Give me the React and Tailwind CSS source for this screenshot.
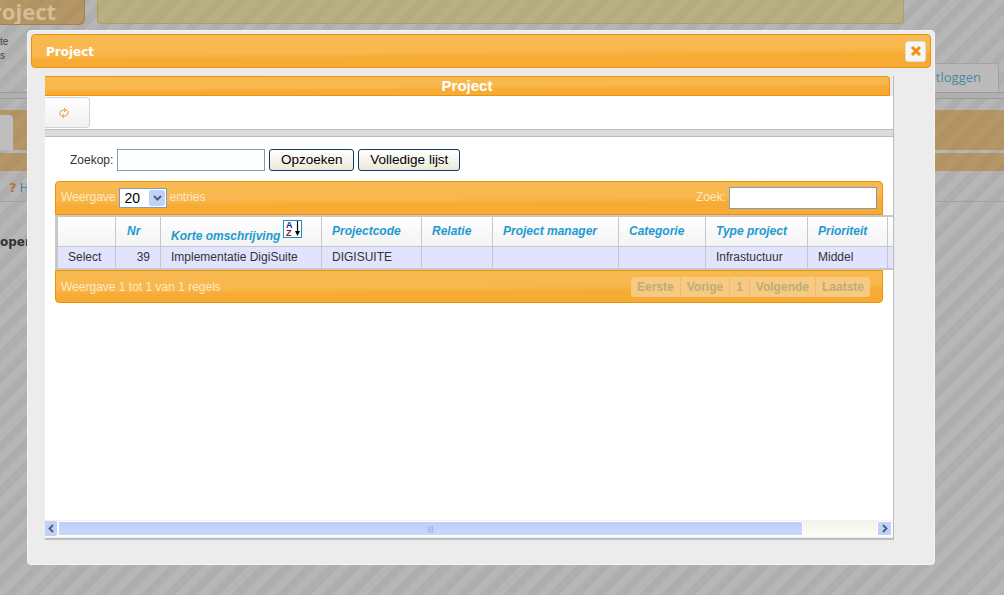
import React from 'react';

const columns = [
  { label: '', width: 'w-[58px]' },
  { label: 'Nr', width: 'w-[45px]', pad: 'pl-[11px] pr-[10px]' },
  { label: 'Korte omschrijving', width: 'w-[161px]', sort: true },
  { label: 'Projectcode', width: 'w-[100px]' },
  { label: 'Relatie', width: 'w-[71px]' },
  { label: 'Project manager', width: 'w-[126px]' },
  { label: 'Categorie', width: 'w-[87px]' },
  { label: 'Type project', width: 'w-[102px]' },
  { label: 'Prioriteit', width: 'w-[80px]' },
  { label: '', width: 'w-[6px]', pad: 'px-0' },
];

const row = ['Select', '39', 'Implementatie DigiSuite', 'DIGISUITE', '', '', '', 'Infrastuctuur', 'Middel', ''];
const pages = ['Eerste', 'Vorige', '1', 'Volgende', 'Laatste'];

const orange = 'bg-[linear-gradient(179.6deg,#f8b950_0%,#f8b84e_50%,#f7ab33_66%,#f7ab33_100%)] border border-[#e8930f]';
const dimmed = 'bg-[rgba(180,120,30,0.52)]';

const SortIcon = () => (
  <svg width="19" height="18" viewBox="0 0 19 18" className="absolute left-[122px] top-[3px]">
    <rect x="0.5" y="0.5" width="18" height="17" fill="#fff" stroke="#1e90c0" />
    <text x="3" y="8" fontSize="9" fontStyle="normal" fontWeight="700" fontFamily="Liberation Sans" fill="#1a1a8c">A</text>
    <text x="3" y="16" fontSize="9" fontStyle="normal" fontWeight="700" fontFamily="Liberation Sans" fill="#8c1a1a">Z</text>
    <path d="M14.5 1v11" stroke="#000" strokeWidth="1.2" />
    <path d="M12 11h5l-2.5 5z" fill="#000" />
  </svg>
);

const ScrollArrow = ({ right }) => (
  <svg width="8" height="9" viewBox="0 0 8 9">
    <path d={right ? 'M2 1l3.5 3.5L2 8' : 'M6 1L2.5 4.5 6 8'} fill="none" stroke="#4d6185" strokeWidth="2" />
  </svg>
);

export default function App() {
  return (
    <div className="relative h-[595px] w-[1004px] overflow-hidden bg-[repeating-linear-gradient(135deg,#b6b6b6_0px,#b6b6b6_8px,#aeaeae_8px,#aeaeae_16px)] font-['Liberation_Sans',sans-serif] text-xs">
      {/* Page behind the overlay */}
      <div className="flex gap-3">
        <div className={`${dimmed} flex h-[25px] w-[85px] items-center justify-end overflow-hidden rounded-br-md border-b border-r border-[#a87f3e] pr-[28px]`}>
          <span className="font-['Open_Sans',sans-serif] text-[22px] font-bold whitespace-nowrap text-[#d6bd93]">Project</span>
        </div>
        <div className="h-[24px] w-[807px] rounded-b-sm border-b border-r border-l border-[#ad9f5c] bg-[rgba(185,170,90,0.55)]" />
      </div>
      <div className="mt-[10px] h-[28px] text-[10px] leading-[14px] text-[#444]">
        <div>te</div>
        <div>s</div>
      </div>
      <div className="flex h-[29px] justify-end pr-[5px]">
        <div className="h-[29px] w-[80px] rounded-t border border-b-0 border-[#a3a3a3] bg-[#bbb] pr-[17px] pt-[5px] text-right font-['Open_Sans',sans-serif] text-[13px] text-[#4d87a0]">Uitloggen</div>
      </div>
      <div className="h-[7px] border-y border-[#999] bg-[#b0b0b0]" />
      <div className={`${dimmed} mt-[11px] flex h-[40px] items-end`}>
        <div className="h-[35px] w-[13px] rounded-tr-sm bg-[#bebebe]" />
      </div>
      <div className={`${dimmed} mt-[3px] h-[18px]`} />
      <div className="mt-[8px] flex h-[23px] items-start border-b border-[#a0a0a0] pl-[9px] font-['DejaVu_Sans',sans-serif] text-[13px] font-bold">
        <span className="text-[#b07a2a]">?</span>
        <span className="ml-[3px] font-normal text-[#4d87a0]">H</span>
      </div>
      <div className="mt-[32px] font-['DejaVu_Sans',sans-serif] text-[12px] font-bold text-[#333]">oper</div>

      {/* Dialog */}
      <div className="absolute left-[27px] top-[30px] h-[535px] w-[908px] rounded border border-[#f4f4f4] bg-[#ececec] p-[3px]">
        <div className={`${orange} flex h-[34px] items-center justify-between rounded pl-[14px] pr-[4px]`}>
          <span className="pt-[1px] font-['DejaVu_Sans',sans-serif] text-[12px] font-bold text-white">Project</span>
          <button className="flex h-[21px] w-[21px] items-center justify-center rounded-[3px] border border-[#ddd] bg-[#f6f6f6]">
            <svg width="12" height="12" viewBox="0 0 12 12">
              <path d="M2 2l8 8M10 2l-8 8" stroke="#f0900c" strokeWidth="3" />
            </svg>
          </button>
        </div>

        <div className="ml-[14px] mt-[8px] h-[464px] w-[849px] border-b-2 border-r border-[#bdbdbd]">
          {/* Inner header */}
          <div className={`${orange} mt-[1px] flex h-[20px] w-[845px] items-center justify-center rounded-tr border-l-0 text-[15px] font-bold text-white`}>Project</div>

          {/* Toolbar */}
          <div className="h-[34px] border-b border-[#bbb] bg-white pt-[1px]">
            <div className="flex h-[31px] w-[45px] items-center rounded-r border border-l-0 border-[#d4d4d4] bg-[linear-gradient(#fff,#f1f1f1)] pl-[14px] pt-[1px]">
              <svg width="10" height="12" viewBox="0 0 10 12" fill="none" stroke="#e8963a" strokeWidth="1">
                <path d="M2 9A3.6 3.6 0 0 1 3.5 3h3M5 1l2 2-2 2" />
                <path d="M8 3A3.6 3.6 0 0 1 6.5 9h-3M5 7L3 9l2 2" />
              </svg>
            </div>
          </div>
          <div className="h-[6px] bg-[#dcdcdc]" />

          <div className="h-[384px] border-t border-[#bbb] bg-white">
            {/* Search form */}
            <div className="ml-[25px] mt-[12px] flex h-[22px] items-center text-[12px] text-[#333]">
              <span>Zoekop:</span>
              <input className="ml-[4px] h-[22px] w-[148px] border border-[#7f9db9] bg-white" />
              <button className="ml-[4px] h-[22px] w-[85px] rounded-[3px] border border-[#0f3a62] bg-[linear-gradient(#fff,#ece9d8)] text-[13.5px] text-black">Opzoeken</button>
              <button className="ml-[4px] h-[22px] w-[102px] rounded-[3px] border border-[#0f3a62] bg-[linear-gradient(#fff,#ece9d8)] text-[13.5px] text-black">Volledige lijst</button>
            </div>

            {/* Table top bar */}
            <div className={`${orange} ml-[10px] mt-[10px] flex h-[34px] w-[828px] items-center justify-between rounded-t pl-[5px] pr-[5px] text-[12px] text-[#fde9c8]`}>
              <div className="flex items-center">
                <span className="pb-[2px]">Weergave</span>
                <div className="ml-[4px] mr-[2px] flex h-[20px] w-[48px] items-center justify-between border border-[#7f9db9] bg-white pl-[4px] pr-[1px] text-[14px] text-black">
                  <span>20</span>
                  <span className="flex h-[16px] w-[16px] items-center justify-center rounded-[2px] bg-[#c1d2f7]">
                    <svg width="9" height="7" viewBox="0 0 9 7">
                      <path d="M1 1l3.5 3.5L8 1" fill="none" stroke="#4d6185" strokeWidth="2" />
                    </svg>
                  </span>
                </div>
                <span className="pb-[2px]">entries</span>
              </div>
              <div className="flex items-center">
                <span className="pb-[2px]">Zoek:</span>
                <input className="ml-[3px] h-[22px] w-[148px] border border-[#7f9db9] bg-white" />
              </div>
            </div>

            {/* Table */}
            <div className="ml-[10px] w-[838px] overflow-hidden border-y-2 border-l-2 border-[#c8c8c8] bg-white">
              <table className="w-[836px] table-fixed border-collapse text-[12px]">
                <thead>
                  <tr className="h-[29px] bg-[linear-gradient(#fff,#f3f3f3)]">
                    {columns.map((col, i) => (
                      <th key={i} className={`${col.width} ${col.pad || 'px-[10px]'} relative border-x border-b border-[#c8c8c8] text-left font-bold italic text-[#1e9ad0]`}>
                        <span className={`block whitespace-nowrap ${col.sort ? 'pt-[9px]' : ''}`}>{col.label}</span>
                        {col.sort && <SortIcon />}
                      </th>
                    ))}
                  </tr>
                </thead>
                <tbody>
                  <tr className="h-[22px] bg-[#e2e4ff]">
                    {row.map((cell, i) => (
                      <td key={i} className={`${i === 9 ? 'px-0' : 'px-[10px]'} border-x border-[#c8c8c8] text-[#333] whitespace-nowrap ${i === 1 ? 'text-right' : ''}`}>{cell}</td>
                    ))}
                  </tr>
                </tbody>
              </table>
            </div>

            {/* Table footer */}
            <div className={`${orange} ml-[10px] flex h-[33px] w-[828px] items-center justify-between rounded-b pl-[5px] pr-[12px] text-[12px] text-[#fde9c8]`}>
              <span>Weergave 1 tot 1 van 1 regels</span>
              <div className="flex h-[20px] items-center rounded-[3px] bg-[#f8c982] font-bold text-[12px] text-[#bcae78]">
                {pages.map((p) => (
                  <span key={p} className="flex h-[20px] items-center border-r border-[#f3bb6b] px-[6px] last:border-r-0">{p}</span>
                ))}
              </div>
            </div>
          </div>

          {/* Horizontal scrollbar */}
          <div className="flex h-[17px] items-center bg-[linear-gradient(#f3f1ea,#fdfdf9)]">
            <div className="flex h-[15px] w-[12px] items-center justify-center rounded-r-[2px] bg-[#c1d2f7]"><ScrollArrow /></div>
            <div className="ml-[1px] flex h-[15px] w-[745px] items-center justify-center rounded-[2px] border border-[#fff] bg-[linear-gradient(#bcd0fb,#c8d8fb)] text-[8px] leading-none text-[#8ea6d8]">|||</div>
            <div className="ml-auto mr-[1px] flex h-[15px] w-[15px] items-center justify-center rounded-[2px] border border-[#fff] bg-[#c1d2f7]"><ScrollArrow right /></div>
          </div>
        </div>
      </div>
    </div>
  );
}
